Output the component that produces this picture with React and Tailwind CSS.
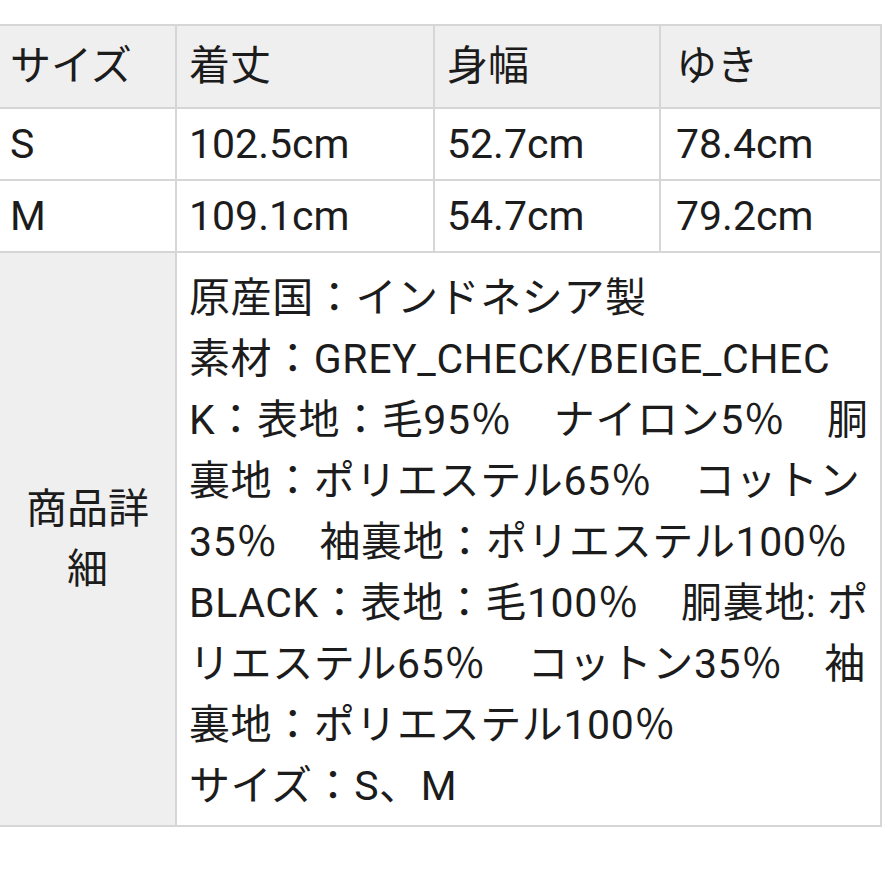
export default function App() {
  const font = { fontFamily: "Roboto, 'Noto Sans CJK JP', sans-serif" };
  const lines = [
    "原産国：インドネシア製",
    "素材：GREY_CHECK/BEIGE_CHEC",
    "K：表地：毛95％　ナイロン5％　胴",
    "裏地：ポリエステル65％　コットン",
    "35％　袖裏地：ポリエステル100％",
    "BLACK：表地：毛100％　胴裏地: ポ",
    "リエステル65％　コットン35％　袖",
    "裏地：ポリエステル100％",
    "サイズ：S、M",
  ];
  const head = "bg-[#efefef] border-r-2 border-b-2 border-[#d6d6d6] h-[83px] flex items-center";
  const cell = "bg-white border-r-2 border-b-2 border-[#d6d6d6] h-[72px] flex items-center";
  const rows = [
    ["S", "102.5cm", "52.7cm", "78.4cm"],
    ["M", "109.1cm", "54.7cm", "79.2cm"],
  ];
  return (
    <div className="w-[884px] h-[884px] bg-white text-[#1c1c1c] text-[41px] leading-none overflow-hidden" style={font}>
      <div className="pt-[24px]">
        <div className="w-[882px] grid grid-cols-[177px_258px_226px_1fr] border-t-2 border-[#d6d6d6]">
          <div className={head + " pl-[10px]"}>サイズ</div>
          <div className={head + " pl-[12px]"}>着丈</div>
          <div className={head + " pl-[12px]"}>身幅</div>
          <div className={head + " pl-[15px]"}>ゆき</div>
          {rows.map((r) => [
            <div key={r[0] + "a"} className={cell + " pl-[10px]"}>{r[0]}</div>,
            <div key={r[0] + "b"} className={cell + " pl-[12px]"}>{r[1]}</div>,
            <div key={r[0] + "c"} className={cell + " pl-[12px]"}>{r[2]}</div>,
            <div key={r[0] + "d"} className={cell + " pl-[15px]"}>{r[3]}</div>,
          ])}
        </div>
        <div className="w-[882px] grid grid-cols-[177px_1fr] border-r-2 border-b-2 border-[#d6d6d6] h-[574px]">
          <div className="bg-[#efefef] border-r-2 border-[#d6d6d6] flex items-center justify-center text-center leading-[60px]">
            <div>商品詳<br />細</div>
          </div>
          <div className="bg-white pl-[12px] pt-[15px] leading-[61px] tracking-[0.6px] whitespace-nowrap overflow-hidden">
            {lines.map((l, i) => (
              <div key={i}>{l}</div>
            ))}
          </div>
        </div>
      </div>
    </div>
  );
}
